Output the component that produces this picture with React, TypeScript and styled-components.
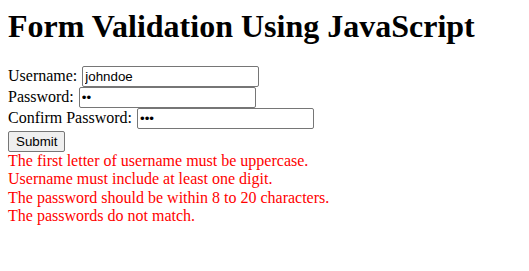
import React from "react"
import styled, { createGlobalStyle } from "styled-components"

const GlobalStyle = createGlobalStyle`
  body {
    margin: 8px;
    font-family: "Liberation Serif", "Times New Roman", serif;
    font-size: 16px;
    color: #000;
    background: #fff;
  }
`

const Title = styled.h1`
  font-size: 32px;
  font-weight: bold;
  margin: 0 0 21px;
`

const Form = styled.form`
  margin: 0;
  line-height: normal;
`

const Label = styled.label`
  font-family: "Liberation Serif", "Times New Roman", serif;
`

const TextInput = styled.input`
  font-family: "Liberation Sans", Arial, sans-serif;
  font-size: 13.33px;
  width: 177px;
  height: 21px;
  box-sizing: border-box;
  padding: 1px 2px;
  border: 1px solid #767676;
  border-radius: 2px;
  margin: 0 0 0 1px;
  vertical-align: baseline;
`

const SubmitButton = styled.button`
  font-family: "Liberation Sans", Arial, sans-serif;
  font-size: 13.33px;
  padding: 1px 7px;
  margin-top: 2px;
  height: 21px;
  border: 1px solid #767676;
  border-radius: 2px;
  background: #efefef;
  color: #000;
`

const Errors = styled.div`
  color: #ff0000;
`

const ErrorLine = styled.div`
  line-height: 18.4px;
`

const errors = [
  "The first letter of username must be uppercase.",
  "Username must include at least one digit.",
  "The password should be within 8 to 20 characters.",
  "The passwords do not match.",
]

const App = () => {
  return (
    <div>
      <GlobalStyle />
      <Title>Form Validation Using JavaScript</Title>
      <Form onSubmit={e => e.preventDefault()}>
        <Label htmlFor="username">Username:</Label>{" "}
        <TextInput id="username" type="text" defaultValue="johndoe" />
        <br />
        <Label htmlFor="password">Password:</Label>{" "}
        <TextInput id="password" type="password" defaultValue="ab" />
        <br />
        <Label htmlFor="confirm">Confirm Password:</Label>{" "}
        <TextInput id="confirm" type="password" defaultValue="abc" />
        <br />
        <SubmitButton type="submit">Submit</SubmitButton>
      </Form>
      <Errors>
        {errors.map(msg => (
          <ErrorLine key={msg}>{msg}</ErrorLine>
        ))}
      </Errors>
    </div>
  )
}

export default App
